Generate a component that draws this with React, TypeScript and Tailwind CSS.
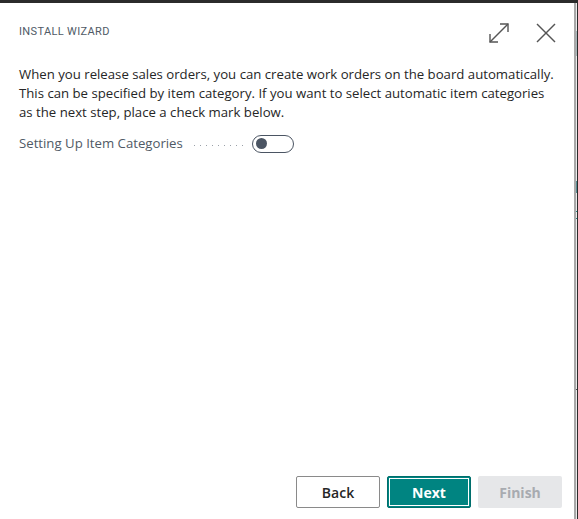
import React from "react";

export default function App() {
  const dots = [0, 1, 2, 3, 4, 5, 6, 7, 8];
  return (
    <div className="w-[578px] h-[519px] bg-[#2b2b2b] pt-[3px] flex flex-col overflow-hidden">
      <div className="flex flex-1 min-h-0">
        <div className="w-[576px] bg-white border-r-2 border-[#a8a8a8] flex flex-col pl-[19px] pr-[12px] pb-[11px]">
          <div className="flex items-center justify-between h-[60px] pb-[1px]">
            <div
              className="text-[11px] tracking-[0.35px] text-[#505a66] uppercase"
              style={{ fontFamily: "Roboto, 'Liberation Sans', sans-serif" }}
            >
              Install Wizard
            </div>
            <div className="flex items-center gap-[25px] mr-[6px] mt-[1px]">
              <svg width="24" height="24" viewBox="0 0 24 24" fill="none" stroke="#555" strokeWidth="1.4">
                <path d="M3 21 L21 3" />
                <path d="M13 3 H21 V11" />
                <path d="M3 13 V21 H11" />
              </svg>
              <svg width="20" height="20" viewBox="0 0 20 20" fill="none" stroke="#555" strokeWidth="1.4">
                <path d="M1 1 L19 19" />
                <path d="M19 1 L1 19" />
              </svg>
            </div>
          </div>
          <p
            className="text-[13.2px] leading-[19px] text-[#262626] mt-[2px] whitespace-nowrap"
            style={{ fontFamily: "'Open Sans', 'Noto Sans', sans-serif" }}
          >
            When you release sales orders, you can create work orders on the board automatically.
            <br />
            This can be specified by item category. If you want to select automatic item categories
            <br />
            as the next step, place a check mark below.
          </p>
          <div className="flex items-center mt-[12px]">
            <span
              className="text-[13.2px] text-[#505a66]"
              style={{ fontFamily: "'Open Sans', 'Noto Sans', sans-serif" }}
            >
              Setting Up Item Categories
            </span>
            <div className="flex items-center gap-[5px] ml-[11px] mt-[3px]">
              {dots.map((d) => (
                <span key={d} className="block w-px h-px bg-[#9aa0a8]" />
              ))}
            </div>
            <div className="ml-[9px] w-[42px] h-[18px] rounded-full border-[1.5px] border-[#4b5563] flex items-center pl-[3px]">
              <span className="block w-[11px] h-[11px] rounded-full bg-[#4b5563]" />
            </div>
          </div>
          <div className="flex-1" />
          <div
            className="flex justify-end gap-[7px]"
            style={{ fontFamily: "'Open Sans', 'Noto Sans', sans-serif" }}
          >
            <button className="w-[84px] h-[32px] border border-[#8a8a8a] rounded-[2px] bg-white text-[14px] text-[#262626] font-semibold">
              Back
            </button>
            <button className="w-[84px] h-[32px] rounded-[2px] bg-[#008481] border border-[#006e6c] p-px">
              <span className="flex items-center justify-center w-full h-full border border-white text-[14px] text-white font-bold">
                Next
              </span>
            </button>
            <button className="w-[84px] h-[32px] rounded-[2px] bg-[#e6e7e9] text-[14px] text-[#a8abb0] font-bold">
              Finish
            </button>
          </div>
        </div>
        <div className="w-[1px] bg-[#ececec] relative">
          <span className="absolute left-0 top-[28px] w-px h-[25px] bg-[#aab8bc]" />
          <span className="absolute left-0 top-[178px] w-px h-[12px] bg-[#5b8e95]" />
          <span className="absolute left-0 top-[208px] w-px h-px bg-[#2c8b8c]" />
          <span className="absolute left-0 top-[215px] w-px h-px bg-[#2c8b8c]" />
          <span className="absolute left-0 top-[386px] w-px h-px bg-[#555]" />
        </div>
      </div>
    </div>
  );
}
